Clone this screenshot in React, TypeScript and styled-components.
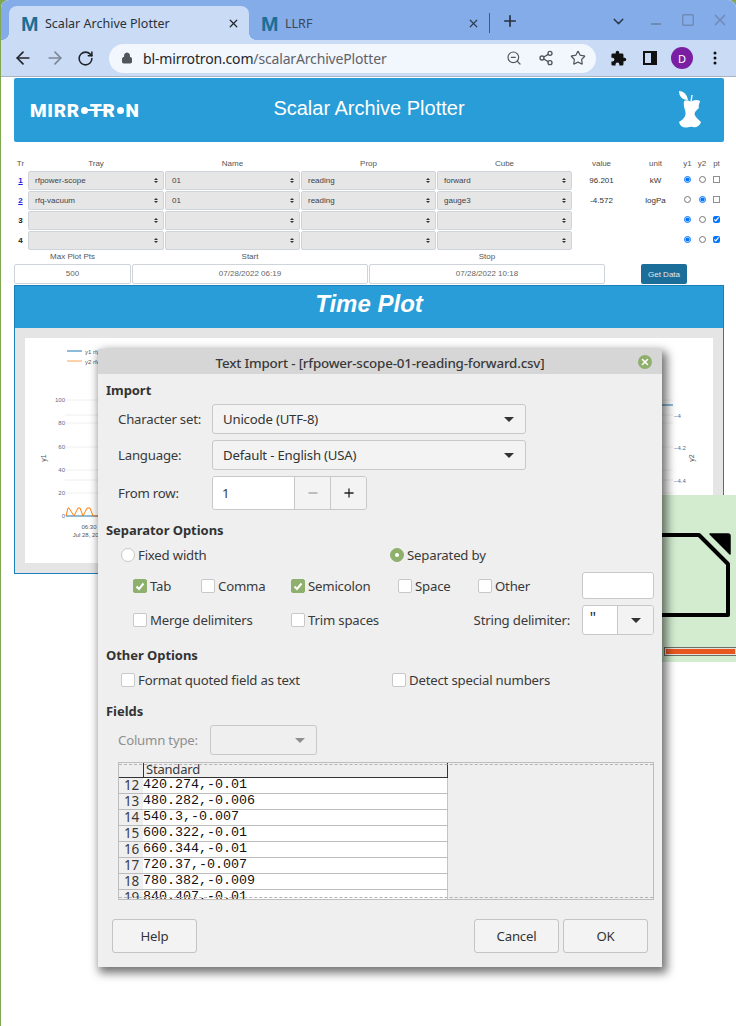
import styled, { createGlobalStyle } from "styled-components";
import { ArrowLeft, ArrowRight, ChevronDown, Lock, Minus, Plus, RotateCw, Share2, Square, Star, X, ZoomOut } from "lucide-react";

const GlobalStyle = createGlobalStyle`
    html, body { margin: 0; padding: 0; background: #fff; }
`;

const uiFont = `"Noto Sans", "Open Sans", sans-serif`;
const webFont = `"Liberation Sans", Arial, sans-serif`;

const Screen = styled.div`
    position: relative;
    width: 736px;
    height: 1026px;
    overflow: hidden;
    background: #7fa650;
`;

/* browser */
const Browser = styled.div`
    margin-left: 1px;
    height: 1026px;
    background: #fff;
    border-radius: 8px 8px 0 0;
    overflow: hidden;
`;

const TabStrip = styled.div`
    display: flex;
    align-items: stretch;
    height: 40px;
    padding: 6px 0 0 8px;
    box-sizing: border-box;
    background: #84ace9;
    font: 12.5px ${uiFont};
    color: #2a3038;
`;

const Tab = styled.div<{ $active?: boolean }>`
    position: relative;
    display: flex;
    align-items: center;
    box-sizing: border-box;
    width: 240px;
    padding: 0 9px 0 12px;
    gap: 8px;
    border-radius: 8px 8px 0 0;
    background: ${(p) => (p.$active ? "#cadbf6" : "transparent")};
    color: ${(p) => (p.$active ? "#2a3038" : "#3a4556")};

    ${(p) =>
        p.$active &&
        `
        &::before, &::after {
            content: "";
            position: absolute;
            bottom: 0;
            width: 8px;
            height: 8px;
        }
        &::before { left: -8px; background: radial-gradient(circle at 0 0, transparent 8px, #cadbf6 8px); }
        &::after { right: -8px; background: radial-gradient(circle at 100% 0, transparent 8px, #cadbf6 8px); }
    `}
`;

const Favicon = styled.span`
    width: 16px;
    font: 900 21px ${webFont};
    line-height: 1;
    color: #1a6f97;
    text-align: center;
`;

const TabTitle = styled.span`
    flex: 1;
`;

const TabDivider = styled.div`
    width: 1px;
    height: 20px;
    margin-top: 7px;
    background: #47597a;
`;

const NewTab = styled.div`
    margin: 6px 0 0 11px;
    color: #26303f;
`;

const WindowButtons = styled.div`
    display: flex;
    align-items: center;
    margin-left: auto;
    padding: 0 7px 6px 0;
    gap: 14px;
    color: #6f8bb8;
`;

const TabsMenu = styled.span`
    margin-right: 6px;
    color: #2f3d54;
    line-height: 0;
    padding-top: 2px;
`;

const MinimizeIcon = styled.span`
    width: 10px;
    height: 2px;
    margin: 8px 6px 0 4px;
    background: #6f8bb8;
`;

const MaximizeIcon = styled(Square)`
    margin-right: 2px;
`;

const Toolbar = styled.div`
    display: flex;
    align-items: center;
    height: 37px;
    padding: 0 0 0 12px;
    box-sizing: border-box;
    background: #cadbf6;
    border-bottom: 1px solid #a9b3c2;
    color: #202429;
`;

const NavButton = styled.span<{ $dim?: boolean }>`
    display: flex;
    width: 32px;
    justify-content: flex-start;
    color: ${(p) => (p.$dim ? "#7d8794" : "#202429")};
`;

const Omnibox = styled.div`
    display: flex;
    align-items: center;
    width: 487px;
    height: 29px;
    margin-left: 0;
    padding: 0 10px 0 12px;
    box-sizing: border-box;
    border-radius: 15px;
    background: #f2f6fd;
    color: #51565c;
    font: 14px ${uiFont};
`;

const Url = styled.span`
    margin-left: 10px;
    flex: 1;
    color: #23272b;
    letter-spacing: -0.16px;

    em {
        font-style: normal;
        color: #5d6369;
    }
`;

const OmniIcons = styled.div`
    display: flex;
    gap: 16px;
    align-items: center;
`;

const ToolIcons = styled.div`
    display: flex;
    align-items: center;
    margin-left: 14px;
    gap: 14px;
`;

const Avatar = styled.span`
    display: flex;
    align-items: center;
    justify-content: center;
    width: 22px;
    height: 22px;
    border-radius: 50%;
    background: #7b1fa2;
    color: #fff;
    font: 11px ${uiFont};
`;

const SidePanelIcon = styled.span`
    display: block;
    box-sizing: border-box;
    width: 14px;
    height: 14px;
    margin-left: 2px;
    border: 2px solid #111;
    border-right-width: 6px;
`;

const Kebab = styled.svg`
    display: block;
`;

/* page */
const Page = styled.div`
    padding: 1px 12px 0 13px;
    font-family: ${webFont};
    color: #444;
`;

const Banner = styled.header`
    display: grid;
    grid-template-columns: 1fr auto 1fr;
    align-items: center;
    height: 64px;
    padding: 0 22px 0 16px;
    box-sizing: border-box;
    border-radius: 2px;
    background: #289dd8;
    color: #fff;
`;

const Logo = styled.div`
    display: flex;
    align-items: center;
    font: 900 19px Roboto, ${webFont};
    letter-spacing: 0.65px;
    line-height: 1;
`;

const LogoDot = styled.span`
    width: 7px;
    height: 7px;
    margin: 0 1.5px;
    border-radius: 50%;
    background: #fff;
`;

const LogoStruck = styled.span`
    position: relative;

    &::after {
        content: "";
        position: absolute;
        left: -4px;
        right: 4px;
        top: 8px;
        height: 2px;
        background: #fff;
    }
`;

const BannerTitle = styled.h1`
    margin: 0 0 4px;
    font: 400 20px ${webFont};
    transform: translateX(3px);
`;

const AppleIcon = styled.svg`
    justify-self: end;
`;

const TrayTable = styled.div`
    display: grid;
    grid-template-columns: 13px 136px 135px 135px 135px 57px 49px 13px 14px 13px;
    column-gap: 1px;
    row-gap: 1px;
    align-items: center;
    margin-top: 16px;
    font-size: 8px;
`;

const HeadCell = styled.div`
    height: 12px;
    line-height: 11px;
    text-align: center;
    color: #555;
`;

const RowLink = styled.a`
    font-weight: 700;
    text-align: center;
    text-decoration: underline;
    color: #1a1ae6;
`;

const RowNum = styled.span`
    font-weight: 700;
    text-align: center;
    color: #222;
`;

const Picker = styled.div`
    display: flex;
    align-items: center;
    justify-content: space-between;
    height: 19px;
    padding: 0 5px 0 6px;
    box-sizing: border-box;
    border: 1px solid #ced4da;
    border-radius: 2px;
    background: #e6e6e6;
    color: #3d4248;
`;

const PickerArrows = styled.span`
    display: flex;
    flex-direction: column;
    gap: 1px;

    &::before, &::after {
        content: "";
        width: 0;
        height: 0;
        border-left: 2px solid transparent;
        border-right: 2px solid transparent;
    }
    &::before { border-bottom: 2px solid #333; }
    &::after { border-top: 2px solid #333; }
`;

const ValueCell = styled.div`
    text-align: center;
    color: #333;
`;

const MiniInput = styled.input`
    justify-self: center;
    width: 7px;
    height: 7px;
    margin: 0 0 2px;

    &[type="checkbox"]:not(:checked) {
        appearance: none;
        box-sizing: border-box;
        border: 1px solid #8f8f8f;
        border-radius: 0;
        background: #fff;
    }
`;

const RangeRow = styled.div`
    display: grid;
    grid-template-columns: 117px 236px 236px 34px 46px;
    column-gap: 1px;
    margin-top: 1px;
    font-size: 8px;
    text-align: center;
`;

const RangeLabel = styled.div`
    height: 13px;
    line-height: 11px;
    color: #555;
`;

const RangeBox = styled.div`
    height: 20px;
    line-height: 18px;
    box-sizing: border-box;
    border: 1px solid #ced4da;
    border-radius: 2px;
    color: #666;
`;

const GetData = styled.button`
    grid-column: 5;
    height: 20px;
    padding: 0;
    border: 0;
    border-radius: 2px;
    background: #1a6e99;
    color: #e6e6e6;
    font: 8px ${webFont};
`;

const PlotPanel = styled.section`
    box-sizing: border-box;
    height: 289px;
    margin-top: 1px;
    border: 1px solid #1c80b9;
    background: #e5e5e5;
`;

const PlotTitle = styled.h2`
    margin: 0;
    height: 42px;
    background: #289dd8;
    color: #fff;
    font: italic 700 24px/36px ${webFont};
    text-align: center;
`;

const PlotArea = styled.div`
    margin: 10px 10px 0 10px;
    height: 225px;
    background: #fff;
`;

/* LibreOffice splash */
const Splash = styled.div`
    position: absolute;
    left: 560px;
    top: 495px;
    width: 176px;
    height: 167px;
    box-sizing: border-box;
    padding-top: 38px;
    background: #d3ecd0;
    overflow: hidden;
`;

const SplashProgress = styled.div`
    margin: 24px 0 0 104px;
    height: 9px;
    padding: 1px;
    box-sizing: border-box;
    border: 1px solid #6b6f68;
    border-right: 0;
    background: #e2e2de;

    &::before {
        content: "";
        display: block;
        height: 100%;
        background: #e8551f;
    }
`;

/* dialog */
const Dialog = styled.div`
    position: absolute;
    left: 98px;
    top: 349px;
    width: 564px;
    height: 618px;
    border-radius: 3px 3px 0 0;
    background: #efefef;
    box-shadow: 3px 4px 10px 2px rgba(0, 0, 0, 0.55);
    font: 13.2px ${uiFont};
    letter-spacing: -0.2px;
    color: #3a3a3a;
`;

const DialogTitle = styled.div`
    position: relative;
    height: 25px;
    line-height: 28px;
    background: #d6d6d6;
    font-weight: 500;
    text-align: center;
    font-size: 13.4px;
    color: #3a3a3a;
`;

const CloseDot = styled.span`
    position: absolute;
    right: 10px;
    top: 6px;
    display: flex;
    align-items: center;
    justify-content: center;
    width: 14px;
    height: 14px;
    border-radius: 50%;
    background: #8fb06d;
    color: #fff;
`;

const DialogBody = styled.div`
    padding: 6px 8px 0;
`;

const Heading = styled.div<{ $gap?: number }>`
    height: 20px;
    line-height: 20px;
    margin-top: ${(p) => p.$gap ?? 0}px;
    font-weight: 700;
    font-size: 13px;
    letter-spacing: -0.05px;
    color: #333;
`;

const FieldRow = styled.div<{ $gap: number; $disabled?: boolean }>`
    display: flex;
    align-items: center;
    margin: ${(p) => p.$gap}px 0 0 12px;
    color: ${(p) => (p.$disabled ? "#8f8f8f" : "inherit")};
`;

const FieldLabel = styled.span<{ $width?: number }>`
    width: ${(p) => p.$width ?? 94}px;
    flex: none;
`;

const Combo = styled.div<{ $width: number; $disabled?: boolean }>`
    display: flex;
    align-items: center;
    justify-content: space-between;
    box-sizing: border-box;
    width: ${(p) => p.$width}px;
    height: 30px;
    padding: 0 11px 0 10px;
    border: 1px solid #c8c8c8;
    border-radius: 3px;
    background: ${(p) => (p.$disabled ? "#efefef" : "#f3f3f3")};
    color: #333;
`;

const Caret = styled.span<{ $dim?: boolean }>`
    width: 0;
    height: 0;
    border-left: 5px solid transparent;
    border-right: 5px solid transparent;
    border-top: 5px solid ${(p) => (p.$dim ? "#8f8f8f" : "#333")};
`;

const Spin = styled.div`
    display: grid;
    grid-template-columns: 81px 36px 36px;
    box-sizing: border-box;
    height: 34px;
    border: 1px solid #c8c8c8;
    border-radius: 3px;
    overflow: hidden;
`;

const SpinValue = styled.div`
    padding-left: 9px;
    line-height: 32px;
    background: #fff;
`;

const SpinButton = styled.div<{ $dim?: boolean }>`
    display: flex;
    align-items: center;
    justify-content: center;
    border-left: 1px solid #c8c8c8;
    background: #f3f3f3;
    color: ${(p) => (p.$dim ? "#888" : "#222")};
`;

const TwoCol = styled.div<{ $gap: number; $left: number; $col: number }>`
    display: grid;
    grid-template-columns: ${(p) => p.$col}px 1fr;
    height: 20px;
    margin: ${(p) => p.$gap}px 0 0 ${(p) => p.$left}px;
`;

const Choice = styled.label`
    display: flex;
    align-items: center;
    gap: 3px;
    white-space: nowrap;
`;

const RadioMark = styled.span<{ $on?: boolean }>`
    display: flex;
    align-items: center;
    justify-content: center;
    box-sizing: border-box;
    width: 14px;
    height: 14px;
    border-radius: 50%;
    border: 1px solid ${(p) => (p.$on ? "#8fb06d" : "#c8c8c8")};
    background: ${(p) => (p.$on ? "#8fb06d" : "#fff")};

    &::after {
        content: "";
        width: 4px;
        height: 4px;
        border-radius: 50%;
        background: ${(p) => (p.$on ? "#fff" : "transparent")};
    }
`;

const CheckMark = styled.span<{ $on?: boolean }>`
    display: flex;
    align-items: center;
    justify-content: center;
    flex: none;
    box-sizing: border-box;
    width: 14px;
    height: 14px;
    border-radius: 2px;
    border: 1px solid ${(p) => (p.$on ? "#8fb06d" : "#c8c8c8")};
    background: ${(p) => (p.$on ? "#8fb06d" : "#fff")};
    color: #fff;
`;

const OptionGrid = styled.div`
    display: grid;
    grid-template-columns: 68px 90px 107px 80px 104px 72px;
    grid-template-rows: 27px 30px;
    row-gap: 6px;
    margin: 7px 0 0 27px;
`;

const Wide = styled(Choice)`
    grid-column: span 2;
`;

const ThirdColumn = styled(Choice)`
    grid-column: 3;
`;

const DelimiterLabel = styled.span`
    grid-column: 5;
    align-self: center;
    justify-self: end;
    margin: 0 12px 0 -50px;
    white-space: nowrap;
`;

const TextBox = styled.div`
    box-sizing: border-box;
    border: 1px solid #c8c8c8;
    border-radius: 3px;
    background: #fff;
`;

const DelimiterCombo = styled.div`
    display: grid;
    grid-template-columns: 34px 1fr;
    box-sizing: border-box;
    border: 1px solid #c8c8c8;
    border-radius: 3px;
    background: #fff;
    overflow: hidden;
`;

const DelimiterValue = styled.span`
    padding: 4px 0 0 6px;
    font: 13px "Liberation Mono", monospace;
    color: #222;
`;

const DelimiterArrow = styled.span`
    display: flex;
    align-items: center;
    justify-content: center;
    border-left: 1px solid #c8c8c8;
    background: #f3f3f3;
`;

const Preview = styled.div`
    position: relative;
    box-sizing: border-box;
    width: 536px;
    height: 138px;
    margin: 7px 0 0 12px;
    border: 1px solid #bdbdbd;
    overflow: hidden;

    &::before, &::after {
        content: "";
        position: absolute;
        left: 0;
        right: 0;
        height: 0;
        border-top: 1px dashed #b4b4b4;
        z-index: 1;
    }
    &::before { top: 1px; }
    &::after { bottom: 1px; }
`;

const PreviewRow = styled.div<{ $head?: boolean }>`
    display: grid;
    grid-template-columns: 25px 304px;
    height: ${(p) => (p.$head ? 15 : 16)}px;
    box-sizing: border-box;
    width: 329px;
    border-bottom: 1px solid ${(p) => (p.$head ? "#333" : "#bcbcbc")};
`;

const RowHead = styled.div`
    padding-right: 4px;
    box-sizing: border-box;
    text-align: right;
    font-size: 13.5px;
    line-height: 15px;
    background: #efefef;
    border-right: 1px solid #333;
`;

const ColHead = styled.div`
    padding-left: 2px;
    font-size: 13px;
    line-height: 13px;
    border-right: 1px solid #333;
`;

const DataCell = styled.div`
    margin-left: -1px;
    font: 13.33px/14px "Liberation Mono", monospace;
    letter-spacing: 0;
    color: #111;
    background: #fff;
    border-right: 1px solid #c4c4c4;
`;

const Footer = styled.div`
    display: flex;
    align-items: center;
    gap: 4px;
    margin: 19px 6px 0;
`;

const DialogButton = styled.button<{ $push?: boolean }>`
    width: 85px;
    height: 34px;
    margin-left: ${(p) => (p.$push ? "auto" : "0")};
    padding: 0;
    border: 1px solid #c4c4c4;
    border-radius: 3px;
    background: #f3f3f3;
    color: #333;
    font: 13.2px ${uiFont};
    letter-spacing: -0.2px;
`;

const RowGroup = styled.div`
    display: contents;
`;

const rows = [
    ["rfpower-scope", "01", "reading", "forward", "96.201", "kW", true, false],
    ["rfq-vacuum", "01", "reading", "gauge3", "-4.572", "logPa", false, false],
    ["", "", "", "", "", "", true, true],
    ["", "", "", "", "", "", true, true],
] as const;

const preview = [
    [12, "420.274,-0.01"],
    [13, "480.282,-0.006"],
    [14, "540.3,-0.007"],
    [15, "600.322,-0.01"],
    [16, "660.344,-0.01"],
    [17, "720.37,-0.007"],
    [18, "780.382,-0.009"],
    [19, "840.407,-0.01"],
] as const;

const leftTicks = [
    ["100", 62],
    ["80", 85],
    ["60", 109],
    ["40", 132],
    ["20", 155],
    ["0", 178],
] as const;

const rightTicks = [
    ["−4", 78],
    ["−4.2", 110],
    ["−4.4", 143],
] as const;

function PlotChart() {
    const axisText = { fontSize: 6, fill: "#5a6b8c", fontFamily: webFont };
    return (
        <svg width="688" height="225" viewBox="0 0 688 225" style={{ display: "block" }}>
            {[77, 142].map((y) => (
                <line key={y} x1="40" x2="648" y1={y} y2={y} stroke="#eee" />
            ))}
            {leftTicks.slice(0, 5).map(([, y]) => (
                <line key={y} x1="40" x2="648" y1={y} y2={y} stroke="#f0f0f0" />
            ))}
            <line x1="42" x2="57" y1="13" y2="13" stroke="#1f77b4" />
            <line x1="42" x2="57" y1="23" y2="23" stroke="#ff7f0e" strokeOpacity="0.7" />
            <text x="60" y="16" fontSize="6" fill="#555" fontFamily={webFont}>y1 rfpower-scope</text>
            <text x="60" y="26" fontSize="6" fill="#555" fontFamily={webFont}>y2 rfq-vacuum</text>
            {leftTicks.map(([label, y]) => (
                <text key={label} x="40" y={y + 2} textAnchor="end" {...axisText}>{label}</text>
            ))}
            {rightTicks.map(([label, y]) => (
                <text key={label} x="649" y={y + 2} {...axisText}>{label}</text>
            ))}
            <text transform="translate(21 120) rotate(-90)" textAnchor="middle" fontSize="7" fill="#555" fontFamily={webFont}>y1</text>
            <text transform="translate(669 120) rotate(-90)" textAnchor="middle" fontSize="7" fill="#555" fontFamily={webFont}>y2</text>
            <path d="M41 178H80" stroke="#1f77b4" strokeWidth="1" fill="none" />
            <path d="M41 178L43 170H44L49 178L53 170H55L58 178L62 170H65L68 178H80" stroke="#ff7f0e" strokeWidth="1" fill="none" />
            <path d="M600 67H648" stroke="#1f77b4" strokeWidth="1" fill="none" />
            <text x="64" y="191" textAnchor="middle" fontSize="6" fill="#555" fontFamily={webFont}>06:30</text>
            <text x="64" y="199" textAnchor="middle" fontSize="6" fill="#555" fontFamily={webFont}>Jul 28, 2022</text>
        </svg>
    );
}

function Check({ on }: { on?: boolean }) {
    return (
        <CheckMark $on={on}>
            {on && (
                <svg width="10" height="10" viewBox="0 0 10 10">
                    <path d="M1.5 5.5L4 8L8.5 2.5" fill="none" stroke="#fff" strokeWidth="2" />
                </svg>
            )}
        </CheckMark>
    );
}

export default function App() {
    return (
        <Screen>
            <GlobalStyle />
            <Browser>
                <TabStrip>
                    <Tab $active>
                        <Favicon>M</Favicon>
                        <TabTitle>Scalar Archive Plotter</TabTitle>
                        <X size={13} strokeWidth={2.4} color="#22272e" />
                    </Tab>
                    <Tab>
                        <Favicon>M</Favicon>
                        <TabTitle>LLRF</TabTitle>
                        <X size={13} strokeWidth={2.2} color="#2f3d54" />
                    </Tab>
                    <TabDivider />
                    <NewTab><Plus size={18} strokeWidth={2.2} /></NewTab>
                    <WindowButtons>
                        <TabsMenu><ChevronDown size={17} strokeWidth={2} /></TabsMenu>
                        <MinimizeIcon />
                        <MaximizeIcon size={14} strokeWidth={2.4} />
                        <X size={18} strokeWidth={2.2} />
                    </WindowButtons>
                </TabStrip>
                <Toolbar>
                    <NavButton><ArrowLeft size={20} strokeWidth={2} /></NavButton>
                    <NavButton $dim><ArrowRight size={20} strokeWidth={2} /></NavButton>
                    <NavButton><RotateCw size={17} strokeWidth={2.2} /></NavButton>
                    <Omnibox>
                        <Lock size={12} fill="#51565c" strokeWidth={2} />
                        <Url>bl-mirrotron.com<em>/scalarArchivePlotter</em></Url>
                        <OmniIcons>
                            <ZoomOut size={16} strokeWidth={1.8} />
                            <Share2 size={16} strokeWidth={2} />
                            <Star size={16} strokeWidth={1.8} />
                        </OmniIcons>
                    </Omnibox>
                    <ToolIcons>
                        <svg width="17" height="17" viewBox="0 0 24 24" fill="#111">
                            <path d="M20.5 11H19V7a2 2 0 0 0-2-2h-4V3.5a2.5 2.5 0 0 0-5 0V5H4a2 2 0 0 0-2 2v3.8h1.5a2.7 2.7 0 0 1 0 5.4H2V20a2 2 0 0 0 2 2h3.8v-1.5a2.7 2.7 0 0 1 5.4 0V22H17a2 2 0 0 0 2-2v-4h1.5a2.5 2.5 0 0 0 0-5z" />
                        </svg>
                        <SidePanelIcon />
                        <Avatar>D</Avatar>
                        <Kebab width="16" height="16" viewBox="0 0 16 16" fill="#111">
                            <circle cx="8" cy="3" r="1.5" />
                            <circle cx="8" cy="8" r="1.5" />
                            <circle cx="8" cy="13" r="1.5" />
                        </Kebab>
                    </ToolIcons>
                </Toolbar>
                <Page>
                    <Banner>
                        <Logo>
                            MIRR<LogoDot /><LogoStruck>TR</LogoStruck><LogoDot />N
                        </Logo>
                        <BannerTitle>Scalar Archive Plotter</BannerTitle>
                        <AppleIcon width="24" height="38" viewBox="0 0 24 38" fill="#fff">
                            <path d="M1 0C5 0 9 3 10 9C5 9 1 6 1 0Z" />
                            <path d="M13 11L14 4" stroke="#fff" strokeWidth="1.4" />
                            <path d="M6 10C9 8 12 10 13 11C15 9 19 8 22 10C22 12 20 14 21 17C19 19 17 20 16.5 23C17 26 20 28 23 31C22 35 18 37 15 36C13 35.5 11 36 9 36.5C5 37 2 35 1 31C4 29 7 27 7.5 23C8 19 5 17 6 10Z" />
                        </AppleIcon>
                    </Banner>
                    <TrayTable>
                        {["Tr", "Tray", "Name", "Prop", "Cube", "value", "unit", "y1", "y2", "pt"].map((h) => (
                            <HeadCell key={h}>{h}</HeadCell>
                        ))}
                        {rows.map((row, i) => (
                            <RowGroup key={i}>
                                {row[0] ? <RowLink href="#">{i + 1}</RowLink> : <RowNum>{i + 1}</RowNum>}
                                {row.slice(0, 4).map((v, c) => (
                                    <Picker key={c}>
                                        <span>{v}</span>
                                        <PickerArrows />
                                    </Picker>
                                ))}
                                <ValueCell>{row[4]}</ValueCell>
                                <ValueCell>{row[5]}</ValueCell>
                                <MiniInput type="radio" name={`axis${i}`} defaultChecked={row[6]} />
                                <MiniInput type="radio" name={`axis${i}`} defaultChecked={!row[6]} />
                                <MiniInput type="checkbox" defaultChecked={row[7]} />
                            </RowGroup>
                        ))}
                    </TrayTable>
                    <RangeRow>
                        <RangeLabel>Max Plot Pts</RangeLabel>
                        <RangeLabel>Start</RangeLabel>
                        <RangeLabel>Stop</RangeLabel>
                        <span />
                        <span />
                        <RangeBox>500</RangeBox>
                        <RangeBox>07/28/2022 06:19</RangeBox>
                        <RangeBox>07/28/2022 10:18</RangeBox>
                        <span />
                        <GetData>Get Data</GetData>
                    </RangeRow>
                    <PlotPanel>
                        <PlotTitle>Time Plot</PlotTitle>
                        <PlotArea><PlotChart /></PlotArea>
                    </PlotPanel>
                </Page>
            </Browser>

            <Splash>
                <svg width="176" height="90" viewBox="0 0 176 90" style={{ display: "block" }}>
                    <path d="M60 2H139L168 31V82H60Z" fill="none" stroke="#000" strokeWidth="4" strokeLinejoin="round" />
                    <path d="M150 1H168Q170 1 170 3V21Z" fill="#000" stroke="#000" strokeWidth="1.5" strokeLinejoin="round" />
                </svg>
                <SplashProgress />
            </Splash>

            <Dialog>
                <DialogTitle>
                    Text Import - [rfpower-scope-01-reading-forward.csv]
                    <CloseDot><X size={10} strokeWidth={3.5} /></CloseDot>
                </DialogTitle>
                <DialogBody>
                    <Heading>Import</Heading>
                    <FieldRow $gap={4}>
                        <FieldLabel>Character set:</FieldLabel>
                        <Combo $width={314}>Unicode (UTF-8)<Caret /></Combo>
                    </FieldRow>
                    <FieldRow $gap={6}>
                        <FieldLabel>Language:</FieldLabel>
                        <Combo $width={314}>Default - English (USA)<Caret /></Combo>
                    </FieldRow>
                    <FieldRow $gap={6}>
                        <FieldLabel>From row:</FieldLabel>
                        <Spin>
                            <SpinValue>1</SpinValue>
                            <SpinButton $dim><Minus size={14} strokeWidth={1.8} /></SpinButton>
                            <SpinButton><Plus size={14} strokeWidth={2.2} /></SpinButton>
                        </Spin>
                    </FieldRow>

                    <Heading $gap={10}>Separator Options</Heading>
                    <TwoCol $gap={5} $left={15} $col={269}>
                        <Choice><RadioMark />Fixed width</Choice>
                        <Choice><RadioMark $on />Separated by</Choice>
                    </TwoCol>
                    <OptionGrid>
                        <Choice><Check on />Tab</Choice>
                        <Choice><Check />Comma</Choice>
                        <Choice><Check on />Semicolon</Choice>
                        <Choice><Check />Space</Choice>
                        <Choice><Check />Other</Choice>
                        <TextBox />
                        <Wide><Check />Merge delimiters</Wide>
                        <ThirdColumn><Check />Trim spaces</ThirdColumn>
                        <DelimiterLabel>String delimiter:</DelimiterLabel>
                        <DelimiterCombo>
                            <DelimiterValue>"</DelimiterValue>
                            <DelimiterArrow><Caret /></DelimiterArrow>
                        </DelimiterCombo>
                    </OptionGrid>

                    <Heading $gap={10}>Other Options</Heading>
                    <TwoCol $gap={5} $left={15} $col={271}>
                        <Choice><Check />Format quoted field as text</Choice>
                        <Choice><Check />Detect special numbers</Choice>
                    </TwoCol>

                    <Heading $gap={11}>Fields</Heading>
                    <FieldRow $gap={4} $disabled>
                        <FieldLabel $width={92}>Column type:</FieldLabel>
                        <Combo $width={107} $disabled><span /><Caret $dim /></Combo>
                    </FieldRow>
                    <Preview>
                        <PreviewRow $head>
                            <RowHead />
                            <ColHead>Standard</ColHead>
                        </PreviewRow>
                        {preview.map(([num, text]) => (
                            <PreviewRow key={num}>
                                <RowHead>{num}</RowHead>
                                <DataCell>{text}</DataCell>
                            </PreviewRow>
                        ))}
                    </Preview>
                    <Footer>
                        <DialogButton>Help</DialogButton>
                        <DialogButton $push>Cancel</DialogButton>
                        <DialogButton>OK</DialogButton>
                    </Footer>
                </DialogBody>
            </Dialog>
        </Screen>
    );
}
